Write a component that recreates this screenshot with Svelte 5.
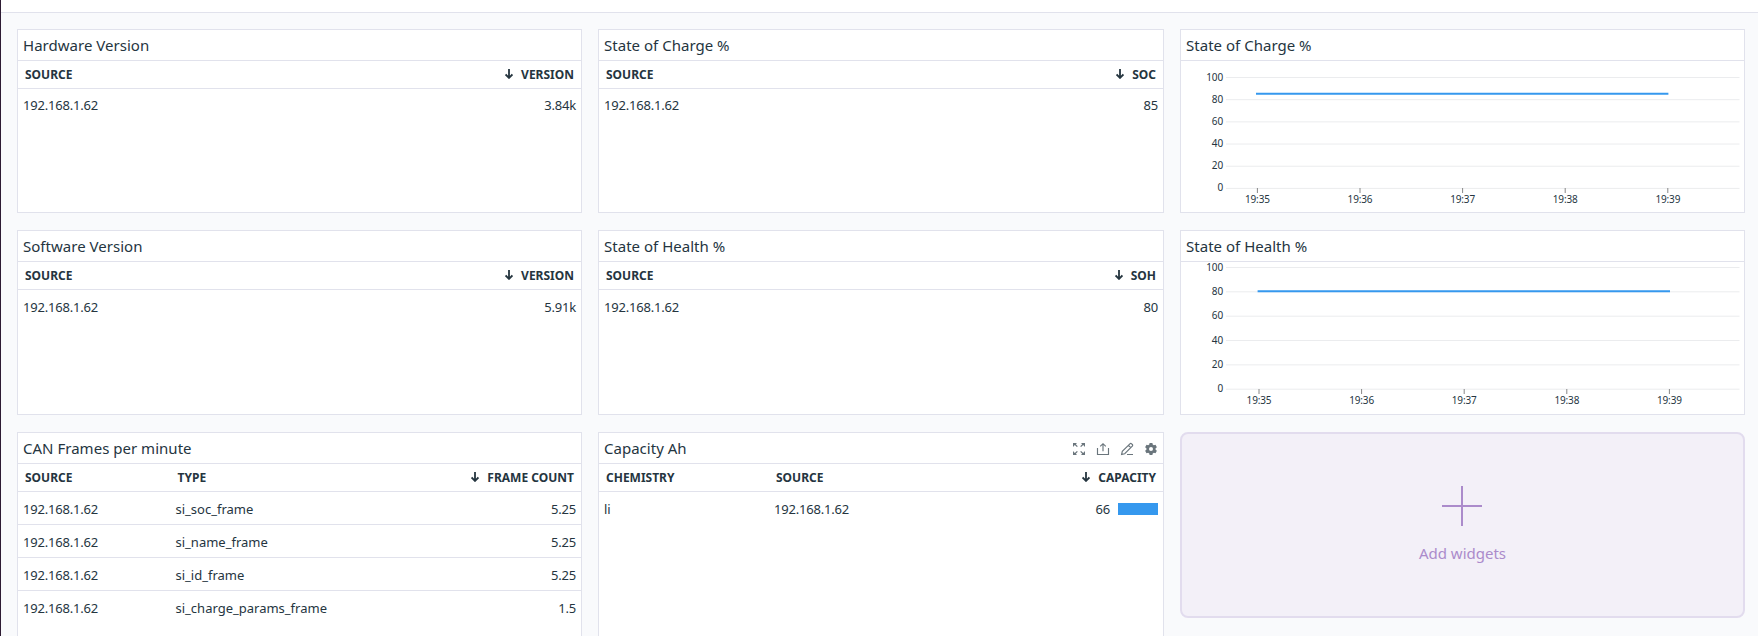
<script>
  const ip = '192.168.1.62';
  const two = (title, head, value, tight = false) => ({
    kind: 'table', title, tight,
    cols: '1fr 1fr', heads: ['SOURCE', head], rows: [[ip, value]],
  });
  const labels = [100, 80, 60, 40, 20, 0];
  const times = ['19:35', '19:36', '19:37', '19:38', '19:39'];

  const widgets = [
    two('Hardware Version', 'VERSION', '3.84k', true),
    two('State of Charge %', 'SOC', '85', true),
    { kind: 'chart', title: 'State of Charge %', h: 151, top: 16.5, bottom: 127.4, series: 32.8, x0: 76.4, base: [20, 42, 64, 86, 108, 130] },
    two('Software Version', 'VERSION', '5.91k'),
    two('State of Health %', 'SOH', '80'),
    { kind: 'chart', title: 'State of Health %', h: 152, top: 5.5, bottom: 127.2, series: 29.2, x0: 78, base: [9, 33, 57, 82, 106, 130] },
    {
      kind: 'table', title: 'CAN Frames per minute',
      cols: '152.5px 1fr 1fr', heads: ['SOURCE', 'TYPE', 'FRAME COUNT'],
      rows: [
        [ip, 'si_soc_frame', '5.25'],
        [ip, 'si_name_frame', '5.25'],
        [ip, 'si_id_frame', '5.25'],
        [ip, 'si_charge_params_frame', '1.5'],
      ],
    },
    {
      kind: 'table', title: 'Capacity Ah', tools: true, bar: true,
      cols: '170px 1fr 1fr', heads: ['CHEMISTRY', 'SOURCE', 'CAPACITY'],
      rows: [['li', ip, '66']],
    },
    { kind: 'add' },
  ];
  const yOf = (w, v) => w.bottom - (v / 100) * (w.bottom - w.top);
</script>

<div class="page">
  <div class="topbar"></div>
  <main class="grid">
    {#each widgets as w}
      {#if w.kind === 'add'}
        <button class="add">
          <svg width="40" height="40" viewBox="0 0 40 40"><path d="M20 0v40M0 20h40" /></svg>
          <span>Add widgets</span>
        </button>
      {:else}
        <section class="card">
          <header>
            <h2>{w.title}</h2>
            {#if w.tools}
              <div class="tools">
                <svg viewBox="0 0 12 12"><path class="fill" d="M0 0h4L2.8 1.2l2 2-.9.9-2.1-2L0 4zM12 0H8l1.2 1.2-2 2 .9.9 2.1-2L12 4zM0 12h4l-1.2-1.2 2-2-.9-.9-2.1 2L0 8zM12 12H8l1.2-1.2-2-2 .9-.9 2.1 2L12 8z" /></svg>
                <svg viewBox="0 0 12 12"><path d="M.5 5v6.5h11V5M6 8.3V.8M3.2 3.4 6 .7l2.8 2.7" /></svg>
                <svg viewBox="0 0 12 12"><path d="M.6 11.4 1.3 8.3 8.9.8a1.2 1.2 0 0 1 1.7 0l.7.7a1.2 1.2 0 0 1 0 1.7L3.7 10.7zM7.5 2.3l2.3 2.3M6 11.5h6" /></svg>
                <svg viewBox="0 0 12 12"><path class="fill" fill-rule="evenodd" d="M4.6 0h2.8l.3 1.6 1.2.7 1.6-.6 1.4 2.5-1.3 1.1v1.4l1.3 1.1-1.4 2.5-1.6-.6-1.2.7-.3 1.6H4.6l-.3-1.6-1.2-.7-1.6.6L.1 7.8l1.3-1.1V5.3L.1 4.2l1.4-2.5 1.6.6 1.2-.7zM6 4a2 2 0 1 0 0 4 2 2 0 0 0 0-4z" /></svg>
              </div>
            {/if}
          </header>
          {#if w.kind === 'table'}
            <div class="heads" style:grid-template-columns={w.cols}>
              {#each w.heads as h, i}
                <div class:last={i === w.heads.length - 1}>
                  {#if i === w.heads.length - 1}
                    <svg width="8" height="10" viewBox="0 0 8 10"><path d="M4 0v9M.6 5.5 4 8.9l3.4-3.4" /></svg>
                  {/if}
                  <span>{h}</span>
                </div>
              {/each}
            </div>
            {#each w.rows as row}
              <div class="row" class:tight={w.tight} style:grid-template-columns={w.cols}>
                {#each row as cell, i}
                  <div class:last={i === row.length - 1} class:num={/^\d/.test(cell)}>
                    <span>{cell}</span>
                    {#if w.bar && i === row.length - 1}<i class="bar"></i>{/if}
                  </div>
                {/each}
              </div>
            {/each}
          {:else}
            <svg class="chart" width="563" height={w.h} viewBox="0 0 563 {w.h}">
              {#each labels as v, i}
                <line class="gridline" x1="45" x2="558.5" y1={yOf(w, v)} y2={yOf(w, v)} />
                <text x="42" y={w.base[i]} text-anchor="end">{v}</text>
              {/each}
              {#each times as t, i}
                <line class="tick" x1={w.x0 + i * 102.6} x2={w.x0 + i * 102.6} y1="127" y2="132" />
                <text x={w.x0 + i * 102.6} y="142" text-anchor="middle">{t}</text>
              {/each}
              <line class="series" x1={w.x0 - 1.4} x2={w.x0 + 411} y1={w.series} y2={w.series} />
            </svg>
          {/if}
        </section>
      {/if}
    {/each}
  </main>
</div>

<style>
  :global(body) { margin: 0; overflow: hidden; }
  .page {
    box-sizing: border-box;
    height: 636px;
    overflow: hidden;
    border-left: 1px solid #2d1b33;
    background: #f9fafc;
    color: #25353f;
    font-family: "Noto Sans", sans-serif;
  }
  .topbar { height: 12px; background: #fff; border-bottom: 1px solid #e1e2ec; }
  .grid {
    display: grid;
    grid-template-columns: 565px 566px 565px;
    grid-template-rows: 184px 185px 220px;
    column-gap: 16px;
    row-gap: 17px;
    padding: 16px;
  }
  .card {
    box-sizing: border-box;
    border: 1px solid #e1e2ec;
    background: #fff;
  }
  header {
    display: flex;
    align-items: center;
    justify-content: space-between;
    height: 30px;
    padding: 0 6px 0 5px;
    border-bottom: 1px solid #e1e2ec;
  }
  h2 { margin: 0; font-size: 15px; font-weight: 400; line-height: 30px; letter-spacing: 0.02px; }
  .tools { display: flex; gap: 12px; padding-top: 1px; }
  .tools svg { width: 12px; height: 12px; fill: none; stroke: #6a757c; stroke-width: 1.15; overflow: visible; }
  .tools .fill { fill: #6a757c; stroke: none; }
  .heads, .row { display: grid; border-bottom: 1px solid #e1e2ec; }
  .heads { height: 27px; font-size: 12px; font-weight: 700; line-height: 27px; }
  .heads > div { padding: 0 7px; }
  .row { height: 32px; font-size: 13px; line-height: 34px; }
  .row.tight { line-height: 32px; }
  .row > div { padding: 0 5px; white-space: nowrap; }
  .row > .num { letter-spacing: -0.2px; }
  .row:last-child { border-bottom: 0; }
  .last { display: flex; justify-content: flex-end; align-items: center; }
  .heads svg { margin: -1px 8px 0 0; fill: none; stroke: #25353f; stroke-width: 1.8; }
  .bar { width: 40px; height: 12px; margin-left: 8px; background: #3598ee; }
  .chart { display: block; overflow: visible; }
  .chart text { font-size: 10px; letter-spacing: -0.15px; fill: #25353f; }
  .gridline { stroke: #ebecee; stroke-width: 1; }
  .tick { stroke: #888; stroke-width: 1; }
  .series { stroke: #3598ee; stroke-width: 2; }
  .add {
    box-sizing: border-box;
    display: flex;
    flex-direction: column;
    align-items: center;
    height: 186px;
    padding: 52px 0 0;
    border: 2px solid #e2dcee;
    border-radius: 8px;
    background: #f3f0f8;
    color: #ab8bcb;
    font: 15px/20px "Noto Sans", sans-serif;
  }
  .add svg { margin-right: 1px; fill: none; stroke: #ab8bcb; stroke-width: 2; }
  .add span { margin-top: 17px; }
</style>
